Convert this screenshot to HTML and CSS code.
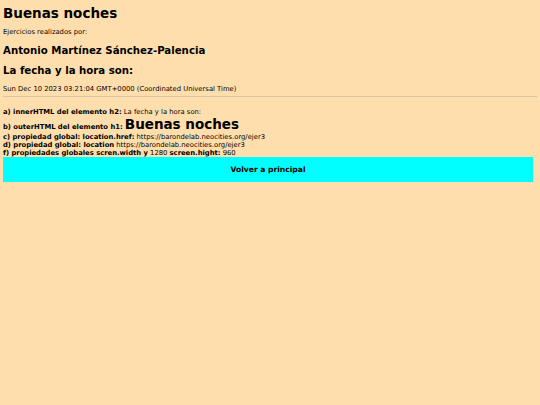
FILE: index.html
```html
<!DOCTYPE html>
<html lang="es">
<head>
<meta charset="utf-8">
<title>Buenas noches</title>
<link rel="stylesheet" href="styles.css">
</head>
<body>
<h1 class="title">Buenas noches</h1>
<p class="small">Ejercicios realizados por:</p>
<h2 class="sub">Antonio Martínez Sánchez-Palencia</h2>
<h2 class="sub sub-date">La fecha y la hora son:</h2>
<p class="small date">Sun Dec 10 2023 03:21:04 GMT+0000 (Coordinated Universal Time)</p>
<hr class="rule">
<div class="results">
  <div class="row row-a"><b>a) innerHTML del elemento h2:</b> La fecha y la hora son:</div>
  <div class="row row-b"><b>b) outerHTML del elemento h1:</b> <span class="inline-h1">Buenas noches</span></div>
  <div class="row"><b>c) propiedad global: location.href:</b> https://barondelab.neocities.org/ejer3</div>
  <div class="row"><b>d) propiedad global: location</b> https://barondelab.neocities.org/ejer3</div>
  <div class="row"><b>f) propiedades globales scren.width y</b> 1280 <b>screen.hight:</b> 960</div>
</div>
<button class="back" type="button">Volver a principal</button>
</body>
</html>
```

FILE: styles.css
```css
html {
  background: #ffdead;
}
body {
  margin: 3px;
  font-family: "DejaVu Sans", Verdana, sans-serif;
  color: #000;
  font-size: 6.8px;
}
.title {
  font-size: 13.5px;
  line-height: 16px;
  margin: 2px 0 0;
  font-weight: bold;
}
.small {
  font-size: 6.8px;
  line-height: 8px;
  margin: 7px 0 0;
}
.sub {
  font-size: 10.2px;
  line-height: 12px;
  margin: 9px 0 0;
  font-weight: bold;
}
.sub-date {
  margin-top: 8px;
}
.date {
  margin-top: 8px;
}
.rule {
  margin: 3px 0 0;
  border: 0;
  border-top: 1px solid #d9c4a3;
  height: 0;
}
.results {
  margin-top: 11px;
}
.row {
  line-height: 8px;
}
.row b {
  font-weight: bold;
}
.row-b {
  margin-top: 2px;
  line-height: 12px;
}
.inline-h1 {
  font-size: 13.5px;
  font-weight: bold;
}
.back {
  display: block;
  width: 530px;
  height: 25px;
  margin: 0;
  border: 0;
  background: #00ffff;
  font-family: "DejaVu Sans", Verdana, sans-serif;
  font-size: 7.6px;
  font-weight: bold;
  color: #000;
  padding: 0;
}
```
